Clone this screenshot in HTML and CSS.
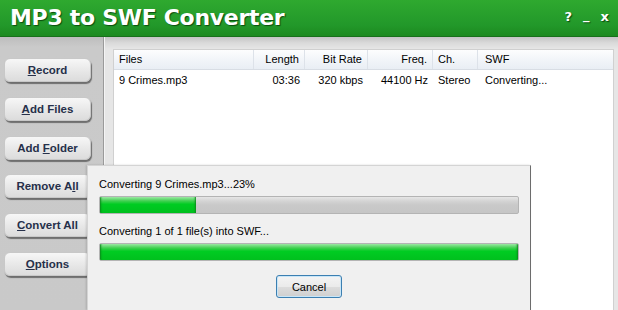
FILE: index.html
```html
<!DOCTYPE html>
<html lang="en">
<head>
  <meta charset="UTF-8">
  <title>MP3 to SWF Converter</title>
  <link rel="stylesheet" href="styles.css">
</head>
<body>
  <div class="window">
    <div class="titlebar">
      <h1>MP3 to SWF Converter</h1>
      <div class="title-buttons">
        <span>?</span>
        <span class="min">_</span>
        <span>x</span>
      </div>
    </div>

    <div class="main">
      <div class="sidebar">
        <button class="side-btn"><u>R</u>ecord</button>
        <button class="side-btn"><u>A</u>dd Files</button>
        <button class="side-btn">Add <u>F</u>older</button>
        <button class="side-btn">Remove A<u>l</u>l</button>
        <button class="side-btn"><u>C</u>onvert All</button>
        <button class="side-btn"><u>O</u>ptions</button>
      </div>

      <div class="content">
        <div class="list">
          <div class="list-row list-head">
            <div class="col c-file">Files</div>
            <div class="col c-len right">Length</div>
            <div class="col c-rate right">Bit Rate</div>
            <div class="col c-freq right">Freq.</div>
            <div class="col c-ch">Ch.</div>
            <div class="col c-swf">SWF</div>
          </div>
          <div class="list-row">
            <div class="col c-file">9 Crimes.mp3</div>
            <div class="col c-len right">03:36</div>
            <div class="col c-rate right">320 kbps</div>
            <div class="col c-freq right">44100 Hz</div>
            <div class="col c-ch">Stereo</div>
            <div class="col c-swf">Converting...</div>
          </div>
        </div>
      </div>
    </div>

    <!-- dialogo de progreso -->
    <div class="progress-dialog">
      <div class="label">Converting 9 Crimes.mp3...23%</div>
      <div class="bar"><div class="fill" style="width: 23%"></div></div>
      <div class="label">Converting 1 of 1 file(s) into SWF...</div>
      <div class="bar"><div class="fill" style="width: 100%"></div></div>
      <div class="dialog-actions">
        <button class="cancel">Cancel</button>
      </div>
    </div>
  </div>
</body>
</html>
```

FILE: styles.css
```css
body {
  margin: 0;
  font-family: "Liberation Sans", Arial, sans-serif;
  font-size: 11px;
  color: #000;
  background: #d8d8d8;
  overflow: hidden;
}
.window {
  position: relative;
  width: 618px;
  height: 310px;
  overflow: hidden;
  display: flex;
  flex-direction: column;
}
.titlebar {
  height: 36px;
  flex: none;
  display: flex;
  align-items: center;
  justify-content: space-between;
  background: linear-gradient(#2fa92f, #22982a 70%, #1c8a1f);
  border-bottom: 1px solid #17701a;
}
.titlebar h1 {
  margin: 0 0 2px 10px;
  font-family: "DejaVu Sans", Verdana, sans-serif;
  font-size: 22px;
  font-weight: bold;
  letter-spacing: -0.3px;
  color: #fff;
  text-shadow: 1px 1px 1px #0b4d0e;
}
.title-buttons {
  display: flex;
  gap: 11px;
  margin-right: 9px;
  margin-bottom: 4px;
  font-family: "DejaVu Sans", Verdana, sans-serif;
  font-size: 13px;
  font-weight: bold;
  color: #fff;
  text-shadow: 1px 1px 1px #0b4d0e;
}
.title-buttons .min {
  position: relative;
  top: -2px;
}
.main {
  flex: 1;
  display: flex;
  background: linear-gradient(#c4c4c4, #dadada 6px, #e6e6e6 12px, #e6e6e6);
}
.sidebar {
  width: 104px;
  flex: none;
  display: flex;
  flex-direction: column;
  gap: 14.8px;
  padding: 21px 0 0 4px;
  box-sizing: border-box;
  background: linear-gradient(#bdbdbd, #cacaca 10px, #c9c9c9);
  border-right: 1px solid #9a9a9a;
}
.side-btn {
  width: 87px;
  height: 24px;
  padding: 0;
  border: 1px solid #c8c8c8;
  border-radius: 6px;
  background: linear-gradient(#f7f7f7, #e6e6e6 60%, #dcdcdc);
  box-shadow: 1px 2px 1px #6e6e6e;
  font-family: "Liberation Sans", Arial, sans-serif;
  font-size: 11.5px;
  font-weight: bold;
  color: #26304a;
}
.content {
  flex: 1;
  padding: 12px 4px 0 8px;
  border-left: 1px solid #f4f4f4;
}
.list {
  height: 100%;
  background: #fff;
  border: 1px solid #d0d0d0;
  border-bottom: none;
}
.list-row {
  display: flex;
  height: 18px;
  align-items: center;
}
.list-head {
  height: 19px;
  background: linear-gradient(#fdfdfe, #f2f5f9 50%, #e9eef4);
  border-bottom: 1px solid #d8dde4;
  margin-bottom: 1px;
}
.col {
  box-sizing: border-box;
  padding: 0 5px;
  white-space: nowrap;
}
.list-head .col {
  height: 100%;
  line-height: 19px;
  border-right: 1px solid #dde2e9;
}
.right {
  text-align: right;
}
.c-file { width: 140px; }
.c-len { width: 51px; }
.c-rate { width: 63px; }
.c-freq { width: 65px; }
.c-ch { width: 45px; }
.c-swf { flex: 1; padding-left: 7px; }
.list-head .c-swf { border-right: none; }

.progress-dialog {
  position: absolute;
  left: 87px;
  top: 165px;
  width: 444px;
  height: 145px;
  box-sizing: border-box;
  padding: 7px 11px 0 11px;
  background: #f0f0f0;
  border: 1px solid #d4d4d4;
  border-right: 1px solid #6c6c6c;
  border-bottom: none;
  box-shadow: -1px 0 2px rgba(0, 0, 0, 0.15);
}
.label {
  height: 16px;
  line-height: 16px;
  margin: 3px 0 4px;
}
.bar {
  height: 18px;
  box-sizing: border-box;
  border: 1px solid #b4b4b4;
  border-radius: 2px;
  background: linear-gradient(#e6e6e6, #d4d4d4 25%, #c9c9c9 50%, #c6c6c6);
  margin-bottom: 9px;
  overflow: hidden;
}
.fill {
  height: 100%;
  background: linear-gradient(#9ce8a4, #40d050 25%, #00cc22 45%, #00c01e 100%);
  box-shadow: inset 3px 0 2px -2px #0a8a1a, inset -3px 0 2px -2px #0a8a1a;
}
.dialog-actions {
  display: flex;
  justify-content: center;
  padding-top: 5px;
}
.cancel {
  width: 66px;
  height: 23px;
  border: 1px solid #3c7fb1;
  border-radius: 3px;
  background: linear-gradient(#f4f4f4, #ebebeb 50%, #dddddd 51%, #cfcfcf);
  box-shadow: inset 0 0 0 1px #c8e6f8;
  font-family: "Liberation Sans", Arial, sans-serif;
  font-size: 11px;
  color: #000;
}
```
